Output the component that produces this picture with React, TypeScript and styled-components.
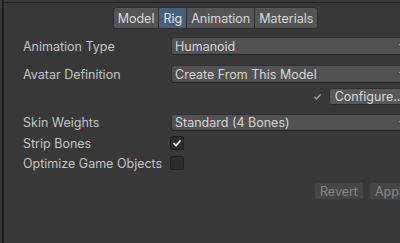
import React from 'react';
import styled, { createGlobalStyle } from 'styled-components';

const GlobalStyle = createGlobalStyle`
  html, body {
    margin: 0;
    padding: 0;
    background: #383838;
    overflow: hidden;
  }
  body {
    font-family: Inter, "Noto Sans", sans-serif;
    font-size: 12px;
  }
`;

const Frame = styled.div`
  width: 424px;
  height: 243px;
  margin-left: 2px;
  border-left: 2px solid #1e1e1e;
  background: #383838;
  position: relative;
  &::before {
    content: '';
    position: absolute;
    left: 0;
    right: 0;
    top: 2px;
    height: 1px;
    background: #232323;
  }
`;

const Panel = styled.div`
  width: 406px;
  padding-top: 7px;
  display: flex;
  flex-direction: column;
`;

const TabBar = styled.div`
  width: 423px;
  display: flex;
  justify-content: center;
`;

const Tab = styled.div<{ $active?: boolean; $first?: boolean; $last?: boolean }>`
  height: 22px;
  box-sizing: border-box;
  padding: 0 4px;
  display: flex;
  align-items: center;
  font-size: 12.5px;
  color: ${(p) => (p.$active ? '#e4e4e4' : '#d8d8d8')};
  background: ${(p) => (p.$active ? '#46607c' : '#545454')};
  border: 1px solid #2e2e2e;
  border-left: ${(p) => (p.$first ? '1px solid #2e2e2e' : 'none')};
  border-radius: ${(p) => (p.$first ? '3px 0 0 3px' : p.$last ? '0 3px 3px 0' : '0')};
`;

const Row = styled.div<{ $h: number; $mt: number }>`
  display: flex;
  align-items: center;
  height: ${(p) => p.$h}px;
  margin-top: ${(p) => p.$mt}px;
  padding-left: 19px;
`;

const Label = styled.div`
  width: 148px;
  color: #c4c4c4;
  font-size: 12.5px;
  white-space: nowrap;
`;

const Dropdown = styled.div`
  flex: 1;
  height: 100%;
  box-sizing: border-box;
  background: #515151;
  border: 1px solid #303030;
  border-bottom-color: #242424;
  border-radius: 3px;
  display: flex;
  align-items: center;
  justify-content: space-between;
  padding: 0 4px 0 3px;
  color: #d6d6d6;
  font-size: 12.5px;
`;

const Arrow = styled.span`
  width: 0;
  height: 0;
  border-left: 3px solid transparent;
  border-right: 3px solid transparent;
  border-top: 4px solid #c4c4c4;
`;

const RightRow = styled.div<{ $h: number; $mt: number; $gap: number; $mr?: number }>`
  display: flex;
  justify-content: flex-end;
  align-items: center;
  gap: ${(p) => p.$gap}px;
  height: ${(p) => p.$h}px;
  margin-top: ${(p) => p.$mt}px;
  margin-right: ${(p) => p.$mr ?? 0}px;
`;

const Button = styled.div<{ $disabled?: boolean }>`
  height: 100%;
  box-sizing: border-box;
  padding: 0 5px;
  display: flex;
  align-items: center;
  border-radius: 3px;
  font-size: 12.5px;
  background: ${(p) => (p.$disabled ? '#454545' : '#585858')};
  color: ${(p) => (p.$disabled ? '#858585' : '#dadada')};
  border: 1px solid ${(p) => (p.$disabled ? '#3a3a3a' : '#303030')};
  white-space: nowrap;
`;

const Check = styled.div`
  width: 14px;
  height: 14px;
  margin-left: -1px;
  box-sizing: border-box;
  background: #2b2b2b;
  border: 1px solid #202020;
  border-radius: 2px;
  display: flex;
  align-items: center;
  justify-content: center;
`;

const CheckMark = ({ color = '#f0f0f0', size = 10 }: { color?: string; size?: number }) => (
  <svg width={size} height={size} viewBox="0 0 10 10">
    <path d="M1.5 5.2 L4 7.6 L8.6 2.4" fill="none" stroke={color} strokeWidth="1.6" />
  </svg>
);

const App: React.FC = () => {
  return (
    <>
      <GlobalStyle />
      <Frame>
        <Panel>
          <TabBar>
            <Tab $first>Model</Tab>
            <Tab $active>Rig</Tab>
            <Tab>Animation</Tab>
            <Tab $last>Materials</Tab>
          </TabBar>

          <Row $h={18} $mt={8}>
            <Label>Animation Type</Label>
            <Dropdown>
              Humanoid
              <Arrow />
            </Dropdown>
          </Row>

          <Row $h={18} $mt={10}>
            <Label>Avatar Definition</Label>
            <Dropdown>
              Create From This Model
              <Arrow />
            </Dropdown>
          </Row>

          <RightRow $h={17} $mt={5} $gap={7}>
            <CheckMark color="#9a9a9a" size={9} />
            <Button>Configure...</Button>
          </RightRow>

          <Row $h={17} $mt={9}>
            <Label>Skin Weights</Label>
            <Dropdown>
              Standard (4 Bones)
              <Arrow />
            </Dropdown>
          </Row>

          <Row $h={14} $mt={5}>
            <Label>Strip Bones</Label>
            <Check>
              <CheckMark />
            </Check>
          </Row>

          <Row $h={14} $mt={6}>
            <Label>Optimize Game Objects</Label>
            <Check />
          </Row>

          <RightRow $h={18} $mt={12} $gap={5} $mr={-5}>
            <Button $disabled>Revert</Button>
            <Button $disabled>Apply</Button>
          </RightRow>
        </Panel>
      </Frame>
    </>
  );
};

export default App;
